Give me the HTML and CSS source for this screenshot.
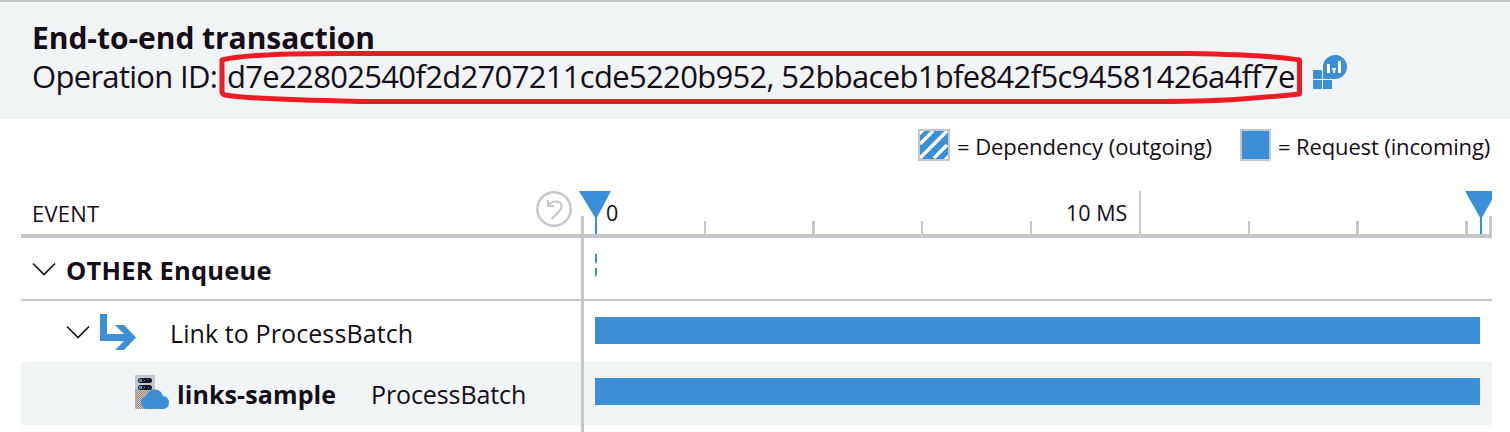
FILE: index.html
```html
<!DOCTYPE html>
<html lang="en">
<head>
<meta charset="utf-8">
<title>End-to-end transaction</title>
<link rel="stylesheet" href="styles.css">
</head>
<body>
<header class="header">
  <h1 class="title">End-to-end transaction</h1>
  <div class="operation">
    <span class="op-label">Operation ID:</span>
    <span class="op-ids">d7e22802540f2d2707211cde5220b952, 52bbaceb1bfe842f5c94581426a4ff7e</span>
    <svg class="op-icon" width="36" height="36" viewBox="0 0 36 36">
      <g fill="#3a8fd7"><rect x="1" y="16" width="9" height="9" rx="1"/><rect x="1" y="26" width="9" height="9" rx="1"/><rect x="11" y="26" width="9" height="9"/><path d="M11 25V12A12 12 0 1 1 23 25Z"/></g>
      <path d="M15 10h3v9h-3zM20 14h4v2h-1v3h-2v-3h-1zM26 7h3v12h-3z" fill="#fff"/>
    </svg>
  </div>
  <svg class="outline" width="1090" height="60" viewBox="215 46 1090 60">
    <path d="M222 60Q245 53.500 340 53.500H1190Q1270 55 1299.500 60V94Q1270 97 1235 99.500Q1200 101.500 1150 101.500H360Q245 99 225 95Q221.500 94 222 90Z" fill="none" stroke="#ed1c24" stroke-width="5" stroke-linejoin="round"/>
  </svg>
</header>
<div class="legend">
  <svg width="32" height="32" viewBox="0 0 32 32">
    <rect x="1" y="1" width="30" height="30" fill="#3a8fd7"/>
    <path d="M2 15L15 2M2 29L29 2M16 29L29 16M26 32L32 26M-1 7L7-1" stroke="#fff" stroke-width="3.400"/>
    <rect x="1" y="1" width="30" height="30" fill="none" stroke="#c5c8cb" stroke-width="2"/>
  </svg>
  <span class="legend-text dep">= Dependency (outgoing)</span>
  <span class="swatch"></span>
  <span class="legend-text req">= Request (incoming)</span>
</div>
<main class="table">
  <div class="row head">
    <div class="cell">
      <span class="event">EVENT</span>
      <svg class="undo" width="36" height="36" viewBox="0 0 36 36" fill="none" stroke="#c5c8cb">
        <circle cx="18" cy="18" r="16.700" stroke-width="2.400"/>
        <path d="M12 9v6h6M12 15C16 9 25 9 25.500 15Q25.500 18 23 20.500L15.500 28" stroke-width="2.200"/>
      </svg>
    </div>
    <div class="axis">
      <svg class="ruler" width="911" height="46" viewBox="581 191 911 46">
        <path d="M704 221h2v14h-2zM812 221h3v14h-3zM921 221h2v14h-2zM1030 221h2v14h-2zM1139 191h2v44h-2zM1248 221h2v14h-2zM1356 221h3v14h-3zM1465 221h3v14h-3zM1489 216h3v19h-3zM581 216h3v21h-3z" fill="#c5c8cb"/>
        <path d="M579 191h32l-14 26.500v16.500h-2v-16.500zM1465 191h32l-15 26.500v16.500h-2v-16.500z" fill="#3a8fd7"/>
      </svg>
      <svg class="flag-edge" width="2" height="4" viewBox="579 191 2 4"><path d="M579 191h2v4z" fill="#3a8fd7"/></svg>
      <span class="zero">0</span>
      <span class="ten">10 MS</span>
    </div>
  </div>
  <div class="row other">
    <div class="cell">
      <svg class="chev" width="24" height="14" viewBox="0 0 24 14"><path d="M1 1.500L12 12.500L23 1.500" fill="none" stroke="#150d18" stroke-width="1.600"/></svg>
      <b class="other-name">OTHER Enqueue</b>
    </div>
    <div class="track"><svg class="dash" width="2" height="24" viewBox="0 0 2 24"><path d="M0 0h2v8l-2 2zM0 14h2v7l-2 2z" fill="#3a8fd7"/></svg></div>
  </div>
  <div class="row link">
    <div class="cell">
      <svg class="chev" width="24" height="14" viewBox="0 0 24 14"><path d="M1 1.500L12 12.500L23 1.500" fill="none" stroke="#150d18" stroke-width="1.600"/></svg>
      <svg class="arrow" width="36" height="36" viewBox="0 0 36 36"><path d="M0 0h7v20h17l-9-9h9l12 12.500L24 36h-9l9-9H0z" fill="#3a8fd7"/></svg>
      <span class="link-name">Link to ProcessBatch</span>
    </div>
    <div class="track"><div class="bar"></div></div>
  </div>
  <div class="row sample">
    <div class="cell">
      <svg class="server" width="34" height="34" viewBox="0 0 34 34">
        <defs><pattern id="grain" width="2" height="2" patternUnits="userSpaceOnUse"><rect width="2" height="2" fill="#c5c8cb"/><path d="M0 0h1v1H0zM1 1h1v1H1z" fill="#a88468"/></pattern></defs>
        <path d="M0 1Q0 0 1 0H20V34H0Z" fill="#c5c8cb"/><path d="M0 14H20V34H0Z" fill="url(#grain)"/>
        <rect x="3" y="3" width="14" height="5" rx="2.500" fill="#171923"/><rect x="3" y="10" width="14" height="5" rx="2.500" fill="#171923"/>
        <path d="M4 4h3v3H4zM9 5h1v1H9zM12 4h1v1h-1zM4 11h3v3H4zM9 12h1v1H9zM13 12h1v1h-1z" fill="#3a8fd7"/>
        <path d="M12 34Q6 33 6 27.500Q6 22 11 21.500Q13 15 19 14.500Q26 14 28 21Q34 22 34 27.500Q34 34 28 34Z" fill="#3a8fd7"/>
      </svg>
      <b class="sample-name">links-sample</b>
      <span class="process">ProcessBatch</span>
    </div>
    <div class="track"><div class="bar"></div></div>
  </div>
  <div class="row tail"><div class="cell"></div><div class="track"></div></div>
</main>
</body>
</html>
```
FILE: styles.css
```css
* { box-sizing: border-box; }
body { margin: 0; width: 1510px; height: 432px; overflow: hidden; background: #fff; color: #150d18; font-family: "Open Sans", "Noto Sans", sans-serif; white-space: nowrap; }
.header { position: relative; height: 119px; padding: 17px 0 0 32px; border-top: 2px solid #c5c8cb; background: #f0f4f5; }
.title { margin: 0; font-size: 30px; line-height: 38px; font-weight: 700; letter-spacing: -0.05px; }
.operation { display: flex; align-items: center; height: 38px; font-size: 31px; line-height: 38px; font-weight: 400; }
.op-label { width: 195px; letter-spacing: -0.7px; }
.op-ids { width: 1085px; letter-spacing: -0.68px; }
.op-icon { margin-top: -9px; flex: none; }
.outline { position: absolute; left: 215px; top: 44px; }
.legend { display: flex; align-items: center; height: 72px; padding: 0 0 20px 918px; font-size: 22px; }
.legend-text { margin: 2px 0 0 7px; }
.dep { width: 283px; letter-spacing: -0.06px; }
.req { letter-spacing: -0.13px; }
.swatch { width: 31px; height: 32px; border: 2px solid #c5c8cb; background: #3a8fd7; }
.table { margin-left: 21px; width: 1471px; }
.row { display: grid; grid-template-columns: 560px 911px; }
.cell { display: flex; align-items: center; }
.track { border-left: 3px solid #c5c8cb; display: flex; align-items: center; }
.head { height: 47px; border-bottom: 4px solid #c5c8cb; }
.head .cell { height: 43px; padding-left: 11px; font-size: 22px; }
.event { width: 504px; letter-spacing: 0.2px; }
.undo { margin-top: -8px; }
.axis { position: relative; }
.ruler { display: block; }
.flag-edge { position: absolute; left: -2px; top: 0; }
.zero, .ten { position: absolute; top: 7px; font-size: 21.5px; line-height: 30px; }
.zero { left: 25px; }
.ten { left: 485px; }
.other { height: 63px; border-bottom: 2px solid #c5c8cb; }
.other .cell { padding-left: 11px; }
.other-name { margin: 2px 0 0 10px; font-size: 25.5px; letter-spacing: 0.2px; }
.dash { margin: -6px 0 0 11px; }
.link { height: 61px; }
.link .cell { padding-left: 45px; }
.arrow { margin-left: 10px; }
.link-name { margin: 2px 0 0 34px; font-size: 25px; letter-spacing: 0.1px; }
.bar { width: 885px; height: 27px; margin: -2px 0 0 11px; background: #3a8fd7; }
.sample { height: 63px; background: #f0f4f5; }
.sample .cell { padding-left: 114px; }
.server { margin-top: -3px; }
.sample .bar { margin-top: -4px; }
.sample-name { margin-left: 8px; width: 194px; font-size: 25px; letter-spacing: 0.1px; }
.process { font-size: 25px; letter-spacing: -0.1px; }
.tail { height: 7px; }
```
